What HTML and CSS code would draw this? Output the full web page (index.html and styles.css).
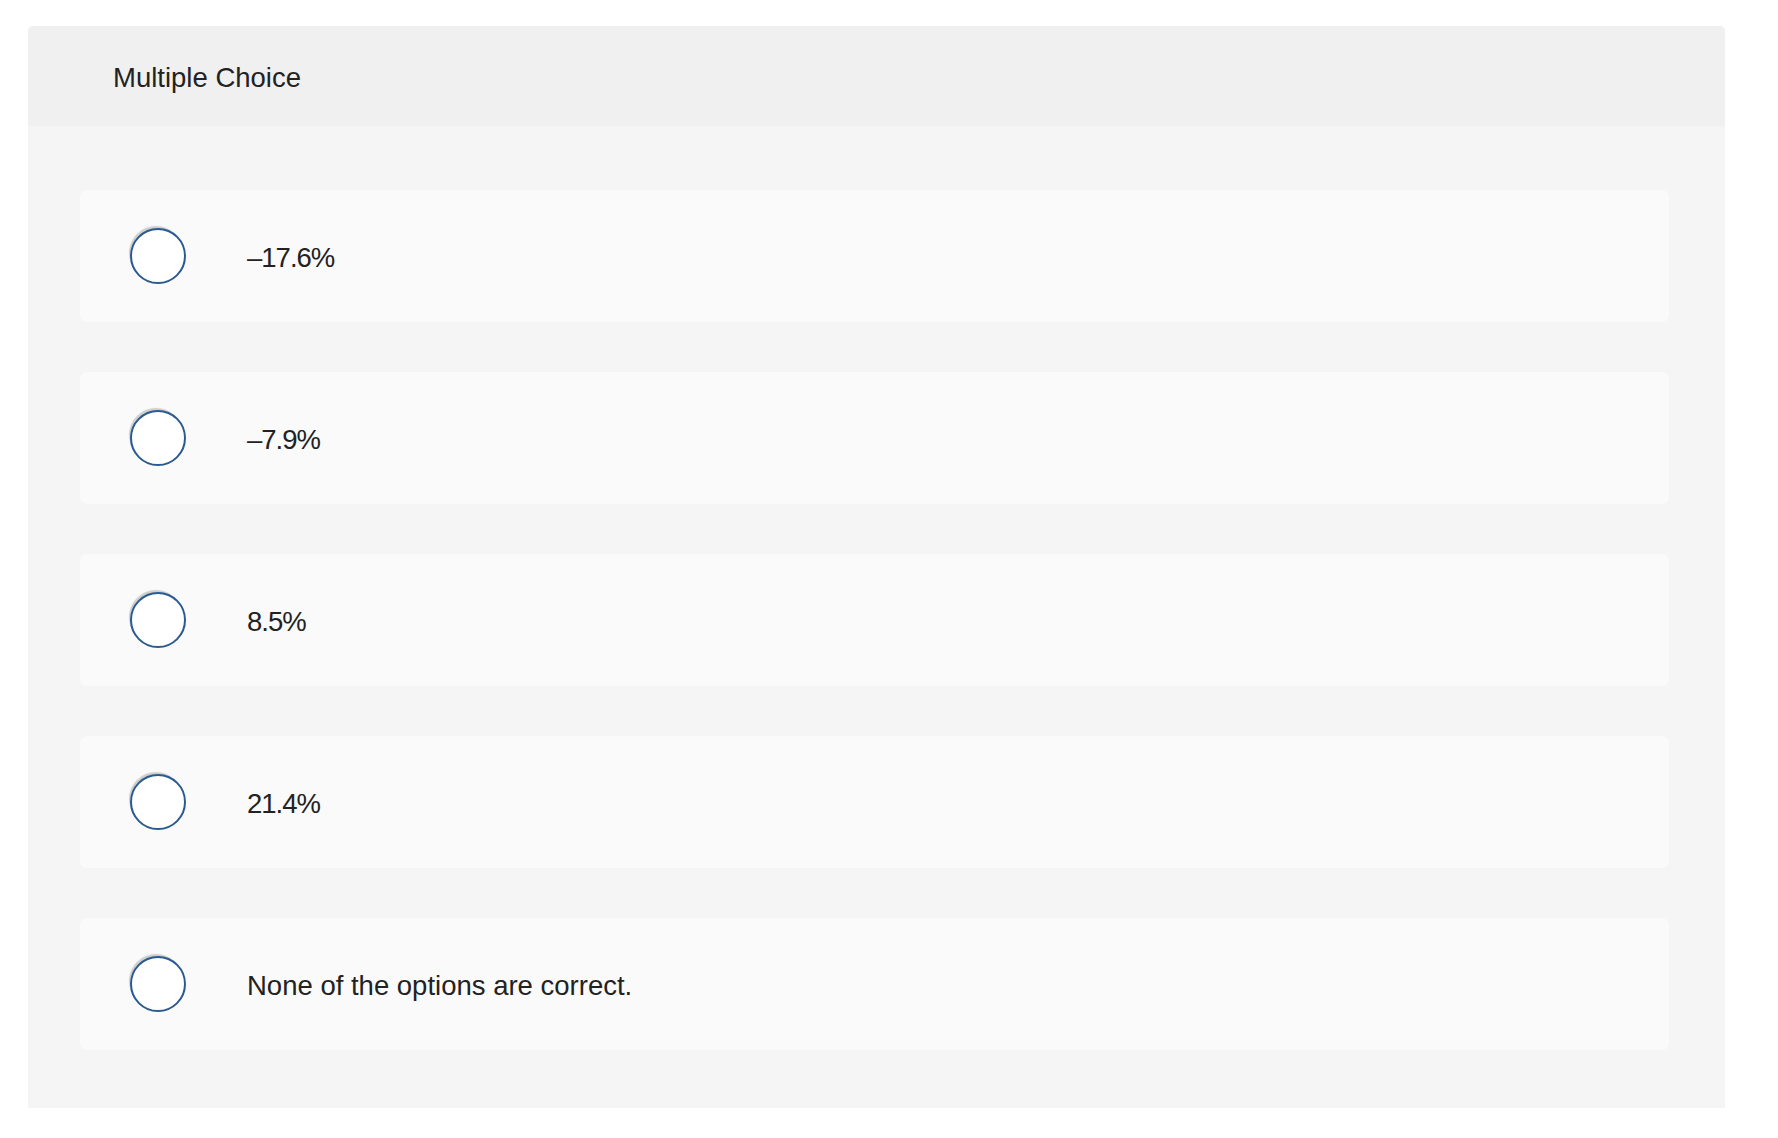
FILE: index.html
```html
<!DOCTYPE html>
<html lang="en">
<head>
<meta charset="utf-8">
<title>Multiple Choice</title>
<link rel="stylesheet" href="styles.css">
</head>
<body>
<section class="question">
  <header class="question-header"><span class="header-text">Multiple Choice</span></header>
  <div class="options">
    <label class="option"><span class="radio"></span><span class="option-text num">&ndash;17.6%</span></label>
    <label class="option"><span class="radio"></span><span class="option-text num">&ndash;7.9%</span></label>
    <label class="option"><span class="radio"></span><span class="option-text num">8.5%</span></label>
    <label class="option"><span class="radio"></span><span class="option-text num">21.4%</span></label>
    <label class="option"><span class="radio"></span><span class="option-text">None of the options are correct.</span></label>
  </div>
</section>
</body>
</html>
```
FILE: styles.css
```css
html, body {
  margin: 0;
  padding: 0;
  background: #ffffff;
}
body {
  font-family: "Liberation Sans", Arial, sans-serif;
  color: #222222;
  padding: 26px 0 0 28px;
}
.question {
  width: 1697px;
  background: #f5f5f5;
  border-radius: 5px 5px 0 0;
  overflow: hidden;
}
.question-header {
  height: 100px;
  background: #f0f0f0;
  display: flex;
  align-items: center;
  padding-left: 85px;
  font-size: 27.5px;
}
.header-text {
  padding-top: 3px;
}
.options {
  display: flex;
  flex-direction: column;
  gap: 50px;
  padding: 64px 56px 58px 52px;
}
.option {
  height: 132px;
  background: #fafafa;
  border-radius: 7px;
  display: flex;
  align-items: center;
  padding-left: 50px;
  font-size: 27.5px;
}
.radio {
  flex: none;
  width: 52px;
  height: 52px;
  border: 2px solid #2a5a8f;
  border-radius: 50%;
  background: #ffffff;
  box-shadow: -2px -3px 1px -1px rgba(0, 0, 0, 0.18);
}
.option-text {
  margin-left: 61px;
  padding-top: 3px;
}
.num {
  letter-spacing: -1px;
}
```
